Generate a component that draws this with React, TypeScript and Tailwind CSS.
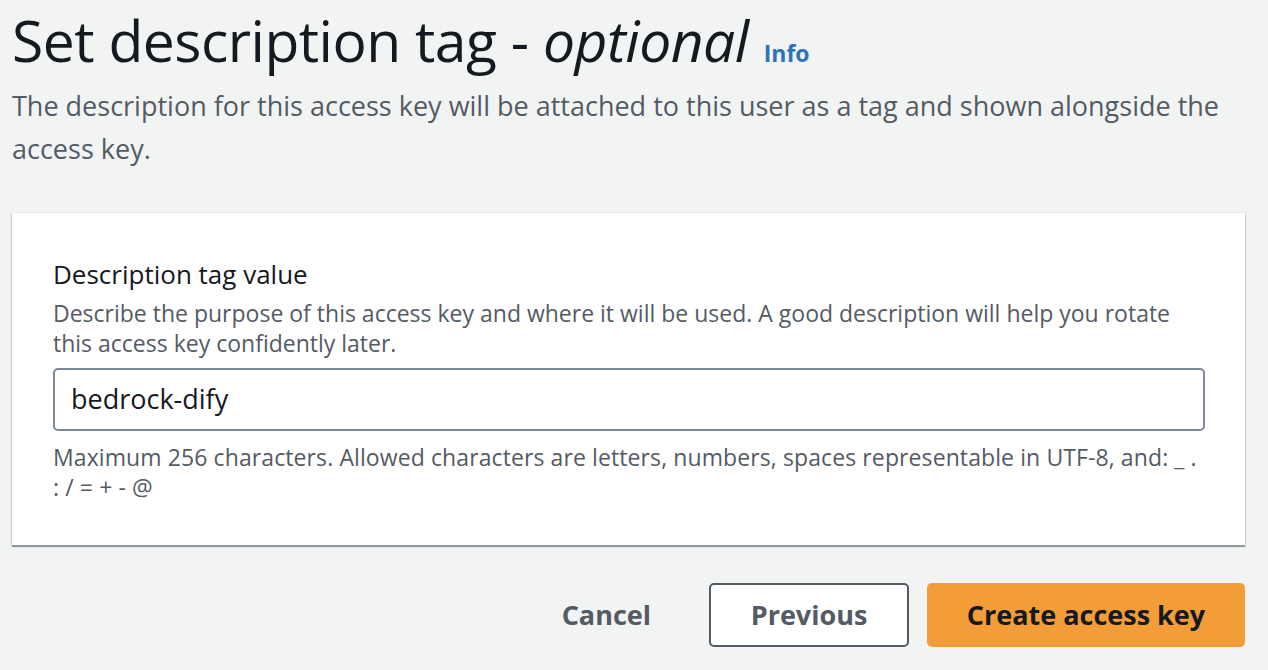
export default function App() {
  return (
    <div
      className="min-h-[670px] w-full bg-[#f2f3f3] pl-[12px] pr-[23px] text-[#16191f]"
      style={{ fontFamily: '"Open Sans", "Noto Sans", sans-serif' }}
    >
      <div className="flex items-baseline pt-[8px]">
        <h1 className="text-[57px] leading-[64px] font-normal tracking-[-0.5px]">
          Set description tag - <span className="italic">optional</span>
        </h1>
        <a className="ml-[15px] text-[23px] font-bold text-[#2d72b8]">Info</a>
      </div>
      <p className="mt-[12px] text-[27px] leading-[43px] text-[#545b64]">
        The description for this access key will be attached to this user as a tag and shown alongside the access key.
      </p>

      <div className="mt-[43px] bg-white pt-[43px] pb-[43px] pl-[41px] pr-[40px] shadow-[0_2px_1px_0_rgba(0,28,36,0.4),-1px_0_1px_0_rgba(0,28,36,0.12),1px_0_1px_0_rgba(0,28,36,0.12)]">
        <label className="mb-[6px] block text-[26px] leading-[36px]">Description tag value</label>
        <p className="text-[23px] leading-[30px] text-[#545b64]">
          Describe the purpose of this access key and where it will be used. A good description will help you rotate
          this access key confidently later.
        </p>
        <div className="mt-[10px] flex h-[63px] items-center rounded-[5px] border-2 border-[#7d8998] px-[16px] text-[27px]">
          bedrock-dify
        </div>
        <p className="mt-[11px] text-[23px] leading-[30px] tracking-[0.1px] text-[#545b64]">
          Maximum 256 characters. Allowed characters are letters, numbers, spaces representable in UTF-8, and: _ . : / = + - @
        </p>
      </div>

      <div className="mt-[38px] flex items-center justify-end gap-[18px]">
        <button className="mr-[40px] text-[27px] font-bold text-[#545b64]">Cancel</button>
        <button className="h-[64px] w-[200px] rounded-[5px] border-2 border-[#545b64] bg-white text-[27px] font-bold text-[#545b64]">
          Previous
        </button>
        <button className="h-[64px] w-[318px] rounded-[5px] bg-[#f29d38] text-[27px] font-bold text-[#16191f]">
          Create access key
        </button>
      </div>
    </div>
  )
}
